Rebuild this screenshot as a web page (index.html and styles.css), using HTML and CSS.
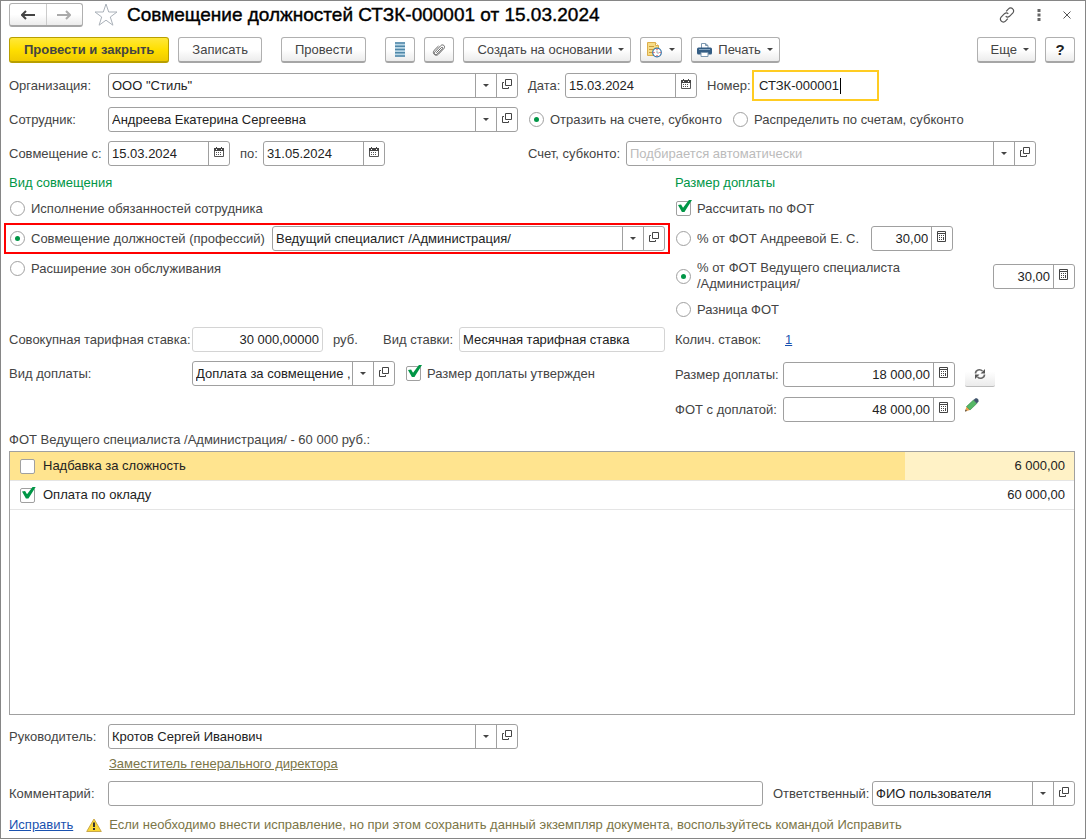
FILE: index.html
```html
<!DOCTYPE html>
<html lang="ru">
<head>
<meta charset="utf-8">
<title>Совмещение должностей СТЗК-000001 от 15.03.2024</title>
<link rel="stylesheet" href="styles.css">
</head>
<body>
<svg class="sprite" aria-hidden="true">
  <symbol id="open" viewBox="0 0 10 10"><path d="M3.5 .5h6v6h-6zM2 3.5H.5v6h6V8" fill="none" stroke="#444"/></symbol>
  <symbol id="calendar" viewBox="0 0 10 10"><path d="M.5 2v7.500h9V2" fill="none" stroke="#555"/><path d="M0 1h10v3H0zM2 0h1v1H2zM7 0h1v1H7z" fill="#444"/><path d="M2 5.500h6M2 7.500h6" stroke="#555" stroke-dasharray="1 1"/><path d="M2 2h1v1H2zM7 2h1v1H7z" fill="#fff"/></symbol>
  <symbol id="calc" viewBox="0 0 10 12"><path d="M.5 .5h8v10h-8zM0 2.500h9" fill="none" stroke="#444"/><path d="M2 4.500h5M2 6.500h5M2 8.500h5" stroke="#444" stroke-dasharray="1 1"/><path d="M6 6h1v3H6z" fill="#444"/></symbol>
</svg>
<main class="form">
  <header class="titlebar">
    <div class="nav">
      <button type="button" aria-label="Назад"><svg width="14" height="10" viewBox="0 0 14 10"><path d="M1 5h13M5 1L1 5l4 4" fill="none" stroke="#444" stroke-width="2"/></svg></button>
      <button type="button" aria-label="Вперед"><svg width="14" height="10" viewBox="0 0 14 10"><path d="M13 5H0M9 1l4 4-4 4" fill="none" stroke="#aaa" stroke-width="2"/></svg></button>
    </div>
    <button class="bare" type="button" aria-label="Избранное"><svg width="24" height="24" viewBox="0 0 24 24"><path d="M12 1l2.700 8H23l-6.700 5 2.600 8.200L12 17.200l-6.900 5L7.700 14 1 9h8.300z" fill="#fff" stroke="#aab1b9"/></svg></button>
    <h1>Совмещение должностей СТЗК-000001 от 15.03.2024</h1>
    <div class="window-tools">
      <button class="bare" type="button" aria-label="Ссылка"><svg width="16" height="16" viewBox="0 0 16 16"><g fill="none" stroke="#555" stroke-width="1.200"><path d="M7.200 4.300l2.300-2.400a2.800 2.800 0 0 1 4.200 0 2.800 2.800 0 0 1 .2 4l-3.400 3.400a2.800 2.800 0 0 1-3.800 0"/><path d="M8.800 11.700l-2.300 2.400a2.800 2.800 0 0 1-4.200 0 2.800 2.800 0 0 1-.2-4l3.400-3.400a2.800 2.800 0 0 1 3.800 0"/></g></svg></button>
      <button class="bare" type="button" aria-label="Меню"><svg width="4" height="12" viewBox="0 0 4 12"><path d="M.5 0h3v3h-3zM.5 4.500h3v3h-3zM.5 9h3v3h-3z" fill="#666"/></svg></button>
      <button class="bare" type="button" aria-label="Закрыть"><svg width="8" height="8" viewBox="0 0 8 8"><path d="M.5 .5l7 7M7.500 .5l-7 7" stroke="#555"/></svg></button>
    </div>
  </header>

  <div class="toolbar">
    <button class="btn primary" type="button">Провести и закрыть</button>
    <button class="btn" type="button">Записать</button>
    <button class="btn apart" type="button">Провести</button>
    <button class="btn icon apart" type="button" aria-label="Список"><svg width="10" height="15" viewBox="0 0 10 15"><path d="M0 0h10v15H0z" fill="#b9d6e6"/><path d="M0 1h10M0 4.200h10M0 7.500h10M0 10.800h10M0 14h10" stroke="#4f87a8" stroke-width="1.400"/></svg></button>
    <button class="btn icon" type="button" aria-label="Файлы"><svg width="14" height="14" viewBox="0 0 14 14"><path d="M4.300 9.800l5-5.200c1-1 2 .1 1.200 1.100L5.300 11c-1.700 1.700-3.900-.3-2.400-2.100L8.700 2.700c2.100-2.100 5.100.4 3.300 2.700l-5.600 5.900c-2.600 2.600-6.800-.8-4.300-3.900L6.500 3" fill="none" stroke="#666"/></svg></button>
    <button class="btn menu" type="button">Создать на основании</button>
    <button class="btn menu tight" type="button" aria-label="Отложенное"><svg width="17" height="16" viewBox="0 0 17 16"><path d="M1.500 .5h8l3 3v10h-11z" fill="#f7dc86" stroke="#dcae4c"/><path d="M9.500 .5v3h3" fill="#fff" stroke="#dcae4c"/><path d="M3 4.500h5M3 7.500h4M3 10.500h3" stroke="#c99b3c"/><circle cx="11" cy="10.500" r="4.300" fill="#fff" stroke="#3b76a8" stroke-width="1.200"/><path d="M11 8.500v2.500h2" fill="none" stroke="#9ab"/><path d="M10.500 7h1v1h-1zM10.500 13h1v1h-1zM7.500 10h1v1h-1zM13.500 10h1v1h-1z" fill="#e22"/></svg></button>
    <button class="btn menu tight" type="button"><svg width="15" height="14" viewBox="0 0 15 14"><path d="M4.500 5V.5h4l2.500 2V5" fill="#fff" stroke="#7d98b0"/><path d="M8.500 .5v2H11" fill="none" stroke="#7d98b0"/><rect y="4.500" width="15" height="7" rx="1.500" fill="#345d84"/><path d="M2 6.500h11" stroke="#86a6c2"/><path d="M4 9.500h7v4H4z" fill="#fff" stroke="#7d98b0"/></svg>Печать</button>
    <button class="btn menu last" type="button">Еще</button>
    <button class="btn icon help" type="button">?</button>
  </div>

  <section class="head">
    <div class="stack">
      <div class="row"><label class="key" for="org">Организация:</label>
        <div class="field grow"><span class="pick"><select id="org"><option>ООО "Стиль"</option></select></span><button type="button" aria-label="Открыть"><svg width="10" height="10"><use href="#open"/></svg></button></div></div>
      <div class="row"><label class="key" for="emp">Сотрудник:</label>
        <div class="field grow"><span class="pick"><select id="emp"><option>Андреева Екатерина Сергеевна</option></select></span><button type="button" aria-label="Открыть"><svg width="10" height="10"><use href="#open"/></svg></button></div></div>
      <div class="row"><label class="key" for="from">Совмещение с:</label>
        <div class="field date"><input id="from" type="text" value="15.03.2024"><button type="button" aria-label="Выбрать дату"><svg width="10" height="10"><use href="#calendar"/></svg></button></div>
        <label class="po" for="to">по:</label>
        <div class="field date"><input id="to" type="text" value="31.05.2024"><button type="button" aria-label="Выбрать дату"><svg width="10" height="10"><use href="#calendar"/></svg></button></div></div>
    </div>
    <div class="stack">
      <div class="row"><label class="data" for="date">Дата:</label>
        <div class="field date wide"><input id="date" type="text" value="15.03.2024"><button type="button" aria-label="Выбрать дату"><svg width="10" height="10"><use href="#calendar"/></svg></button></div>
        <label class="num" for="num">Номер:</label><input class="active" id="num" type="text" value="СТЗК-000001"></div>
      <div class="row"><label class="opt"><input type="radio" name="acc" checked>Отразить на счете, субконто</label>
        <label class="opt"><input type="radio" name="acc">Распределить по счетам, субконто</label></div>
      <div class="row account"><label for="acc">Счет, субконто:</label>
        <div class="field grow"><span class="pick"><select class="empty" id="acc"><option>Подбирается автоматически</option></select></span><button type="button" aria-label="Открыть"><svg width="10" height="10"><use href="#open"/></svg></button></div></div>
    </div>
  </section>

  <section class="split">
    <div class="options">
      <h2>Вид совмещения</h2>
      <div class="row"><label class="opt"><input type="radio" name="kind">Исполнение обязанностей сотрудника</label></div>
      <div class="row marked"><label class="opt kind"><input type="radio" name="kind" checked>Совмещение должностей (профессий)</label>
        <div class="field grow"><span class="pick"><select aria-label="Должность"><option>Ведущий специалист /Администрация/</option></select></span><button type="button" aria-label="Открыть"><svg width="10" height="10"><use href="#open"/></svg></button></div></div>
      <div class="row"><label class="opt"><input type="radio" name="kind">Расширение зон обслуживания</label></div>
    </div>
    <div class="options">
      <h2>Размер доплаты</h2>
      <div class="row"><label class="opt"><input type="checkbox" checked>Рассчитать по ФОТ</label></div>
      <div class="row"><label class="opt"><input type="radio" name="pct">% от ФОТ Андреевой Е. С.</label>
        <div class="field pct"><input type="text" value="30,00" aria-label="Процент от ФОТ Андреевой Е. С."><button type="button" aria-label="Калькулятор"><svg width="10" height="12"><use href="#calc"/></svg></button></div></div>
      <div class="row two"><label class="opt"><input type="radio" name="pct" checked><span>% от ФОТ Ведущего специалиста<br>/Администрация/</span></label>
        <div class="field pct"><input type="text" value="30,00" aria-label="Процент от ФОТ Ведущего специалиста"><button type="button" aria-label="Калькулятор"><svg width="10" height="12"><use href="#calc"/></svg></button></div></div>
      <div class="row"><label class="opt"><input type="radio" name="pct">Разница ФОТ</label></div>
    </div>
  </section>

  <section class="split pay">
    <div class="stack">
      <div class="row"><label class="rate" for="rate">Совокупная тарифная ставка:</label><input class="readonly amount" id="rate" type="text" value="30 000,00000" readonly><span class="unit">руб.</span>
        <label class="ratekind" for="ratekind">Вид ставки:</label><input class="readonly grow" id="ratekind" type="text" value="Месячная тарифная ставка" readonly></div>
      <div class="row"><label class="rate" for="extra">Вид доплаты:</label>
        <div class="field extra"><span class="pick"><select id="extra"><option>Доплата за совмещение , исполнение обязанностей</option></select></span><button type="button" aria-label="Открыть"><svg width="10" height="10"><use href="#open"/></svg></button></div>
        <label class="opt approved"><input type="checkbox" checked>Размер доплаты утвержден</label></div>
    </div>
    <div class="stack sums">
      <div class="row"><span class="sum">Колич. ставок:</span><a class="count" href="#rates">1</a></div>
      <div class="row"><label class="sum" for="pay">Размер доплаты:</label>
        <div class="field money"><input id="pay" type="text" value="18 000,00"><button type="button" aria-label="Калькулятор"><svg width="10" height="12"><use href="#calc"/></svg></button></div>
        <button class="refresh" type="button" aria-label="Обновить"><svg width="12" height="12" viewBox="0 0 12 12"><path d="M1.500 5.500C1.500 2 6 .5 8.500 3M10.500 6.500C10.500 10 6 11.500 3.500 9" fill="none" stroke="#666" stroke-width="1.600"/><path d="M11 1v4.500H6.500zM1 11V6.500h4.500z" fill="#555"/></svg></button></div>
      <div class="row"><label class="sum" for="fund">ФОТ с доплатой:</label>
        <div class="field money"><input id="fund" type="text" value="48 000,00"><button type="button" aria-label="Калькулятор"><svg width="10" height="12"><use href="#calc"/></svg></button></div>
        <button class="bare edit" type="button" aria-label="Изменить"><svg width="14" height="14" viewBox="0 0 14 14"><path d="M0 13.500l1.500-5 3.500 3.500z" fill="#e9a24c"/><path d="M0 13.500l.6-2 1.400 1.500z" fill="#444"/><path d="M1.500 8.500L8.500 2l3.300 3.500L5 12z" fill="#55b866" stroke="#348445" stroke-width=".6"/><path d="M8.500 2l2-1.800H12L13.500 1.800v1.800l-1.700 1.900z" fill="#41546c"/></svg></button></div>
    </div>
  </section>

  <p class="caption">ФОТ Ведущего специалиста /Администрация/ - 60 000 руб.:</p>
  <div class="list">
    <table>
      <tr class="selected"><td><label class="opt"><input type="checkbox">Надбавка за сложность</label></td><td class="value">6 000,00</td></tr>
      <tr><td><label class="opt"><input type="checkbox" checked>Оплата по окладу</label></td><td class="value">60 000,00</td></tr>
    </table>
  </div>

  <div class="row boss"><label class="key" for="boss">Руководитель:</label>
    <div class="field"><span class="pick"><select id="boss"><option>Кротов Сергей Иванович</option></select></span><button type="button" aria-label="Открыть"><svg width="10" height="10"><use href="#open"/></svg></button></div></div>
  <a class="position" href="#position">Заместитель генерального директора</a>
  <div class="row"><label class="key" for="note">Комментарий:</label><input class="note grow" id="note" type="text">
    <label class="resp" for="resp">Ответственный:</label>
    <div class="field extra"><span class="pick"><select id="resp"><option>ФИО пользователя</option></select></span><button type="button" aria-label="Открыть"><svg width="10" height="10"><use href="#open"/></svg></button></div></div>
  <footer class="foot"><a href="#fix">Исправить</a><svg width="16" height="14" viewBox="0 0 16 14"><path d="M8 1l7.300 12.500H.7z" fill="#fbd834" stroke="#c9a84a" stroke-linejoin="round"/><path d="M7 4.500h2V9H7zM7 10h2v2H7z" fill="#333"/></svg><span>Если необходимо внести исправление, но при этом сохранить данный экземпляр документа, воспользуйтесь командой Исправить</span></footer>
</main>
</body>
</html>
```
FILE: styles.css
```css
* { box-sizing: border-box; }
body { margin: 0; background: #fff; color: #444; font: 13px/16px "Liberation Sans", Arial, sans-serif; }
.sprite { position: absolute; width: 0; height: 0; }
button, input, select { font: inherit; color: inherit; margin: 0; }
button { cursor: pointer; }
svg { display: block; flex: none; }
a { color: #1a52b0; }

.form { display: flex; flex-direction: column; min-height: 100vh; padding: 2px 10px 5px 8px; border: 1px solid #868686; }
.grow { flex: 1; min-width: 0; }

.titlebar { display: flex; align-items: center; height: 24px; margin-bottom: 10px; }
.nav { display: flex; width: 74px; height: 24px; border: 1px solid #b0b0b0; border-bottom: 2px solid #a6a6a6; border-radius: 3px; background: linear-gradient(#fff 50%, #ececec); }
.nav button { flex: 1; display: grid; place-items: center; padding: 0; border: 0; background: none; }
.nav button + button { border-left: 1px solid #ccc; }
.bare { padding: 0; border: 0; background: none; }
.titlebar > .bare { margin: 0 9px 0 11px; }
h1 { margin: 0; color: #000; font-size: 19px; line-height: 24px; font-weight: 400; -webkit-text-stroke: 0.4px #000; white-space: nowrap; }
.window-tools { display: flex; align-items: center; gap: 22px; margin-left: auto; padding-right: 4px; }

.toolbar { display: flex; gap: 9px; margin-bottom: 10px; }
.btn { display: flex; align-items: center; justify-content: center; gap: 6px; height: 26px; padding: 0 13px; border: 1px solid #b0b0b0; border-bottom: 2px solid #a6a6a6; border-radius: 3px; background: linear-gradient(#fff 50%, #ececec); white-space: nowrap; }
.btn.primary { padding: 0 14px; border-color: #b89f00; background: linear-gradient(#ffe83a, #ffdf00 50%, #f0ca00); font-weight: 700; }
.btn.apart { margin-left: 10px; }
.btn.icon { width: 30px; padding: 0; }
.btn.help { color: #222; font-size: 15px; font-weight: 700; }
.btn.menu { padding-right: 6px; }
.btn.menu::after { content: ""; border: 3px solid transparent; border-top-color: #444; border-bottom: 0; }
.btn.tight { padding-left: 5px; }
.btn.last { margin-left: auto; }

.head { display: grid; grid-template-columns: 509fr 547fr; gap: 10px; margin-bottom: 9px; }
.stack { display: flex; flex-direction: column; gap: 9px; min-width: 0; }
.row { display: flex; align-items: center; min-height: 25px; white-space: nowrap; }
.key { flex: none; width: 99px; }

.field { display: flex; height: 25px; border: 1px solid #a0a0a0; border-radius: 3px; background: #fff; color: #222; }
.field input, .field select { flex: 1; width: 100%; min-width: 0; height: 23px; padding: 0 3px; border: 0; outline: 0; background: none; }
.field button { flex: none; display: grid; place-items: center; width: 21px; padding: 0 0 3px; border: 0; border-left: 1px solid #a0a0a0; background: none; }
.pick { position: relative; flex: 1; display: flex; min-width: 0; }
.field select { appearance: none; padding-right: 21px; overflow: hidden; }
.field select.empty { color: #bbb; }
.pick::before { content: ""; position: absolute; top: 0; bottom: 0; right: 20px; width: 1px; background: #a0a0a0; }
.pick::after { content: ""; position: absolute; top: 10px; right: 7px; border: 3px solid transparent; border-top-color: #444; border-bottom: 0; pointer-events: none; }
.date { width: 122px; }
.date.wide { width: 132px; }
.po { padding: 0 5px 0 10px; }
.data { width: 37px; }
.num { width: 55px; padding-left: 10px; }
.active { width: 127px; height: 31px; margin: -3px 0; padding: 0 5px; border: 2px solid #fc2; outline: 0; background: linear-gradient(#000, #000) 86px center / 1px 16px no-repeat; color: #222; }
.account { padding-right: 39px; }
.account > label { width: 98px; }

.opt { display: flex; align-items: center; gap: 6px; }
.opt + .opt { margin-left: 10px; }
.opt input { appearance: none; flex: none; position: relative; width: 15px; height: 15px; margin-left: 1px; border: 1px solid #a0a0a0; border-radius: 2px; background: #fff; }
.opt input[type=radio] { border-radius: 50%; }
.opt input[type=radio]:checked::before { content: ""; position: absolute; inset: 4px; border-radius: 50%; background: #009646; }
.opt input[type=checkbox]:checked::before { content: ""; position: absolute; left: 1px; top: -2px; width: 14px; height: 12px; background: #009646; clip-path: polygon(0 42%, 22% 38%, 36% 64%, 78% 0, 100% 0, 46% 100%, 28% 100%); }

.split { display: grid; grid-template-columns: 656fr 400fr; gap: 10px; margin-bottom: 5px; }
.options { display: flex; flex-direction: column; gap: 5px; min-width: 0; }
h2 { margin: 0; color: #009646; font-size: 13px; line-height: 16px; font-weight: 400; }
.marked { margin: 0 -2px; padding: 0 2px; outline: 2px solid #f00; outline-offset: 1px; }
.kind { width: 263px; }
.pct { width: 82px; margin-left: 12px; }
.pct input, .money input { text-align: right; }
.two { justify-content: space-between; margin-top: 4px; }

.pay { margin-bottom: 10px; }
.rate { flex: none; width: 183px; }
.readonly, .note { height: 25px; padding: 0 3px; border: 1px solid #d4d4d4; border-radius: 3px; outline: 0; background: #fff; color: #222; }
.amount { width: 131px; text-align: right; }
.unit { width: 60px; padding-left: 10px; }
.ratekind { width: 76px; }
.extra { width: 203px; }
.approved { margin-left: 10px; }
.sums { gap: 10px; }
.sum { flex: none; width: 108px; }
.count { margin-left: 2px; }
.money { width: 172px; }
.refresh { display: grid; place-items: center; width: 30px; height: 25px; margin-left: 10px; padding: 0; border: 0; border-bottom: 1px solid #bbb; border-radius: 2px; background: linear-gradient(#fff 40%, #ebebeb); }
.edit { align-self: flex-start; margin: 1px 0 0 10px; }

.caption { margin: 0 0 3px; }
.list { flex: 1; min-height: 60px; margin-bottom: 9px; border: 1px solid #a0a0a0; color: #222; }
table { width: 100%; border-spacing: 0; }
td { height: 29px; padding: 0 9px; border-bottom: 1px solid #e5e5e5; }
td .opt { gap: 8px; }
.value { width: 169px; text-align: right; }
.selected td { background: #ffe48f; }
.selected .value { background: #fff2c6; }

.boss .field { width: 410px; }
.position { align-self: flex-start; margin: 7px 0 9px 100px; color: #7b7547; }
.note { border-color: #a0a0a0; }
.resp { padding-left: 10px; width: 109px; }
.foot { display: flex; align-items: center; gap: 13px; margin-top: 11px; color: #7b7547; white-space: nowrap; }
.foot span { margin-left: -6px; }
```
